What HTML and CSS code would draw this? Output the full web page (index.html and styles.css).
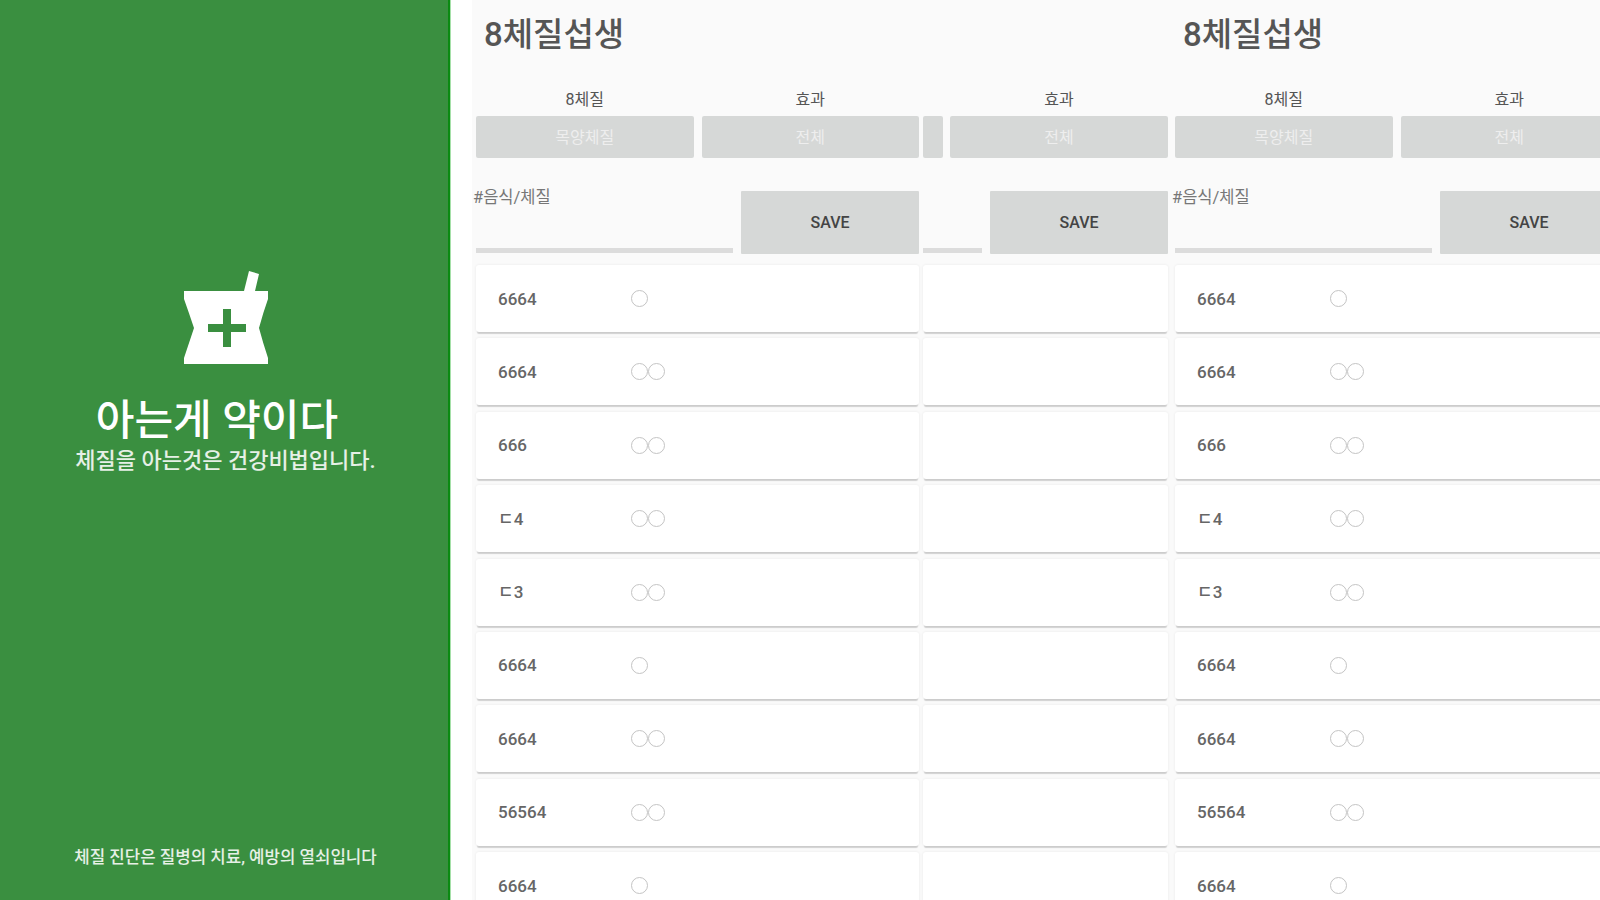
FILE: index.html
```html
<!DOCTYPE html>
<html lang="ko">
<head>
    <meta charset="UTF-8">
    <meta name="viewport" content="width=device-width, initial-scale=1.0">
    <title>8체질섭생</title>
    <link rel="stylesheet" href="styles.css">
</head>
<body>
    <div class="wrapper">
        <aside class="side">
            <div class="side-main">
                <svg class="logo" viewBox="0 0 84 93" width="84" height="93">
                    <path fill="#fff" fill-rule="evenodd" d="M0 20 L60 20 L65 0 L75 3 L71 20 L84 20 L84 28 Q79 42 75 57 Q79 72 84 87 L84 93 L0 93 L0 87 Q5 72 10 57 Q5 42 0 28 Z M39 38 L47 38 L47 53 L62 53 L62 61 L47 61 L47 76 L39 76 L39 61 L24 61 L24 53 L39 53 Z"/>
                </svg>
                <h1 class="side-title">아는게 약이다</h1>
                <p class="side-sub">체질을 아는것은 건강비법입니다.</p>
            </div>
            <p class="side-foot">체질 진단은 질병의 치료, 예방의 열쇠입니다</p>
        </aside>
        <main class="content">
            <!-- 첫번째 패널 -->
            <section class="panel">
                <h2 class="panel-title">8체질섭생</h2>
                <div class="panel-cols">
                    <div class="col col-main">
                        <div class="filters">
                            <div class="filter"><label>8체질</label><div class="select">목양체질</div></div>
                            <div class="filter"><label>효과</label><div class="select">전체</div></div>
                        </div>
                        <div class="form">
                            <div class="field"><span>#음식/체질</span></div>
                            <button class="save">SAVE</button>
                        </div>
                        <ul class="rows">
                            <li class="row"><span class="name">6664</span><span class="dots"><i></i></span></li>
                            <li class="row"><span class="name">6664</span><span class="dots"><i></i><i></i></span></li>
                            <li class="row"><span class="name">666</span><span class="dots"><i></i><i></i></span></li>
                            <li class="row"><span class="name">ㄷ4</span><span class="dots"><i></i><i></i></span></li>
                            <li class="row"><span class="name">ㄷ3</span><span class="dots"><i></i><i></i></span></li>
                            <li class="row"><span class="name">6664</span><span class="dots"><i></i></span></li>
                            <li class="row"><span class="name">6664</span><span class="dots"><i></i><i></i></span></li>
                            <li class="row"><span class="name">56564</span><span class="dots"><i></i><i></i></span></li>
                            <li class="row"><span class="name">6664</span><span class="dots"><i></i></span></li>
                        </ul>
                    </div>
                    <div class="col col-extra">
                        <div class="filters">
                            <div class="filter filter-sliver"><label></label><div class="select"></div></div>
                            <div class="filter"><label>효과</label><div class="select">전체</div></div>
                        </div>
                        <div class="form">
                            <div class="field"></div>
                            <button class="save">SAVE</button>
                        </div>
                        <ul class="rows">
                            <li class="row"></li>
                            <li class="row"></li>
                            <li class="row"></li>
                            <li class="row"></li>
                            <li class="row"></li>
                            <li class="row"></li>
                            <li class="row"></li>
                            <li class="row"></li>
                            <li class="row"></li>
                        </ul>
                    </div>
                </div>
            </section>
            <!-- 두번째 패널 -->
            <section class="panel">
                <h2 class="panel-title">8체질섭생</h2>
                <div class="panel-cols">
                    <div class="col col-main">
                        <div class="filters">
                            <div class="filter"><label>8체질</label><div class="select">목양체질</div></div>
                            <div class="filter"><label>효과</label><div class="select">전체</div></div>
                        </div>
                        <div class="form">
                            <div class="field"><span>#음식/체질</span></div>
                            <button class="save">SAVE</button>
                        </div>
                        <ul class="rows">
                            <li class="row"><span class="name">6664</span><span class="dots"><i></i></span></li>
                            <li class="row"><span class="name">6664</span><span class="dots"><i></i><i></i></span></li>
                            <li class="row"><span class="name">666</span><span class="dots"><i></i><i></i></span></li>
                            <li class="row"><span class="name">ㄷ4</span><span class="dots"><i></i><i></i></span></li>
                            <li class="row"><span class="name">ㄷ3</span><span class="dots"><i></i><i></i></span></li>
                            <li class="row"><span class="name">6664</span><span class="dots"><i></i></span></li>
                            <li class="row"><span class="name">6664</span><span class="dots"><i></i><i></i></span></li>
                            <li class="row"><span class="name">56564</span><span class="dots"><i></i><i></i></span></li>
                            <li class="row"><span class="name">6664</span><span class="dots"><i></i></span></li>
                        </ul>
                    </div>
                </div>
            </section>
        </main>
    </div>
</body>
</html>
```
FILE: styles.css
```css
*{box-sizing: border-box;}
ul{list-style: none; margin: 0; padding: 0;}
html, body{height: 100%;}
body{
    margin: 0;
    overflow: hidden;
    background-color: #fff;
    font-family: Roboto, "Noto Sans CJK KR", sans-serif;
    color: #444;
}
.wrapper{
    display: flex;
    height: 900px;
    width: 1600px;
    overflow: hidden;
}

/* 왼쪽 사이드 */
.side{
    flex: none;
    width: 450px;
    height: 100%;
    padding-left: 3px;
    background-color: #3a8f40;
    border-right: 2px solid #0b8a12;
    box-shadow: 1px 0 0 #a5e0a8;
    color: #fff;
    display: flex;
    flex-direction: column;
    align-items: center;
}
.side-main{
    padding-top: 271px;
    display: flex;
    flex-direction: column;
    align-items: center;
    flex: 1;
}
.logo{
    display: block;
    margin-left: 1px;
}
.side-title{
    margin: 33px 17px 0 0;
    font-size: 42px;
    line-height: 48px;
    font-weight: 500;
}
.side-sub{
    margin: 2px 0 0;
    font-size: 22px;
    line-height: 28px;
    font-weight: 500;
    color: #e6f0e6;
}
.side-foot{
    margin: 0 0 32px;
    font-size: 16.8px;
    line-height: 22px;
    font-weight: 500;
    color: #e6f0e6;
}

/* 오른쪽 본문 */
.content{
    flex: none;
    margin-left: 22px;
    padding-left: 4px;
    width: 1200px;
    display: flex;
    gap: 7px;
    background-color: #fafafa;
}
.panel{
    flex: none;
}
.panel:first-child{
    width: 692px;
}
.panel:last-child{
    width: 443px;
}
.panel-title{
    margin: 0;
    padding: 15px 0 0 8px;
    font-size: 33px;
    line-height: 40px;
    font-weight: 500;
    color: #555;
}
.panel-cols{
    display: flex;
    gap: 4px;
}
.col-main{
    flex: none;
    width: 443px;
}
.col-extra{
    flex: none;
    width: 245px;
}

.filters{
    display: flex;
    gap: 8px;
    margin-top: 35px;
}
.filter{
    flex: 1;
    min-width: 0;
    text-align: center;
}
.filter label{
    display: block;
    height: 20px;
    font-size: 16px;
    line-height: 20px;
    color: #555;
}
.select{
    height: 42px;
    margin-top: 6px;
    background-color: #d6d8d7;
    border-radius: 2px;
    color: #eee;
    font-size: 16px;
    line-height: 43px;
}
.filter-sliver{
    flex: none;
    width: 20px;
}
.col-extra .filter:last-child{
    flex: none;
    width: 218px;
}
.col-extra .filters{
    gap: 7px;
}

.form{
    display: flex;
    gap: 8px;
    margin-top: 33px;
    height: 63px;
}
.field{
    flex: 1;
    min-width: 0;
    position: relative;
    border-bottom: 5px solid #dcdcdc;
    margin-bottom: 1px;
    font-size: 16.5px;
    color: #777;
}
.field span{
    position: absolute;
    left: -3px;
    top: -4px;
    line-height: 22px;
}
.save{
    flex: none;
    width: 178px;
    border: 0;
    border-radius: 1px;
    background-color: #d6d8d7;
    color: #444;
    font-family: inherit;
    font-size: 16px;
    font-weight: 500;
}

.rows{
    margin-top: 11px;
}
.row{
    display: flex;
    align-items: center;
    height: 67px;
    margin-bottom: 6.4px;
    padding-left: 22px;
    background-color: #fff;
    border-radius: 3px;
    box-shadow: 0 3px 1px -1px rgba(0,0,0,.16), 0 0 3px rgba(0,0,0,.07);
}
.name{
    width: 133px;
    font-size: 17px;
    line-height: 20px;
    font-weight: 500;
    color: #666;
}
.dots{
    display: flex;
}
.dots i{
    display: block;
    width: 17px;
    height: 17px;
    border: 1.5px solid #c4c4c4;
    border-radius: 50%;
}
```
